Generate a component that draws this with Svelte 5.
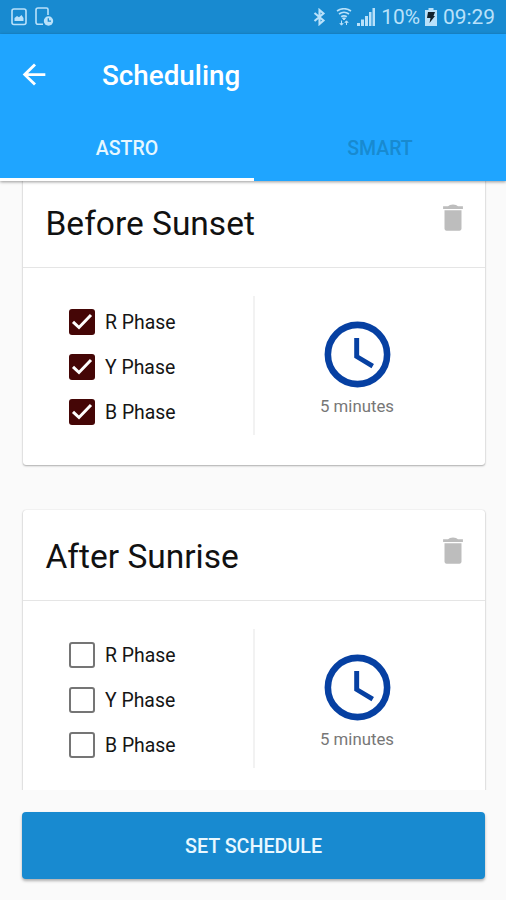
<script lang="ts">
	type Phase = { name: string; checked: boolean };
	type Schedule = { title: string; duration: string; phases: Phase[] };

	let activeTab = $state('ASTRO');
	const tabs = ['ASTRO', 'SMART'];

	let schedules: Schedule[] = $state([
		{
			title: 'Before Sunset',
			duration: '5 minutes',
			phases: [
				{ name: 'R Phase', checked: true },
				{ name: 'Y Phase', checked: true },
				{ name: 'B Phase', checked: true }
			]
		},
		{
			title: 'After Sunrise',
			duration: '5 minutes',
			phases: [
				{ name: 'R Phase', checked: false },
				{ name: 'Y Phase', checked: false },
				{ name: 'B Phase', checked: false }
			]
		}
	]);

	function remove(index: number) {
		schedules.splice(index, 1);
	}
</script>

<div class="screen">
	<div class="status-bar">
		<div class="notifications">
			<svg width="16" height="18" viewBox="0 0 16 18">
				<rect x="1" y="1" width="14" height="15.5" rx="2" fill="none" stroke="currentColor" stroke-width="1.6" />
				<path d="M3.5 13V10l2.5-2 2 1.2L10.5 7l2 3v3z" fill="currentColor" />
			</svg>
			<svg width="19" height="20" viewBox="0 0 19 20">
				<path d="M8 17.2H3a2 2 0 0 1-2-2V3a2 2 0 0 1 2-2h8.5a1.5 1.5 0 0 1 1.5 1.5V8" fill="none" stroke="currentColor" stroke-width="1.6" />
				<circle cx="13.5" cy="14" r="4.7" fill="currentColor" />
				<path d="M13.3 11.2V14.2H16" fill="none" stroke="#188ad0" stroke-width="1.3" />
			</svg>
		</div>
		<div class="system">
			<svg class="bluetooth" width="13" height="18" viewBox="0 0 13 18">
				<path d="M1.5 5l9 7.5L6.5 16V2l4 3.5-9 7.5" fill="none" stroke="currentColor" stroke-width="2.1" />
			</svg>
			<svg class="wifi" width="16" height="18" viewBox="0 0 16 18">
				<path d="M1 3Q8-1.5 15 3M3 6Q8 2.5 13 6M5.2 8.8Q8 6.8 10.8 8.8" fill="none" stroke="currentColor" stroke-width="1.7" />
				<path d="M6.5 10h3L8 12zM5.5 12.5V17M3.8 15.2l1.7 2 1.7-2M10.5 17V13M8.8 14.8l1.7-2 1.7 2" fill="currentColor" stroke="currentColor" stroke-width="1" />
			</svg>
			<svg class="signal" width="18" height="18" viewBox="0 0 18 18">
				<path d="M0 15h3v3H0zM4 11.5h3V18H4zM8 8h3v10H8zM12 4h2.5v14H12zM15.5 0H18v18h-2.5z" fill="currentColor" />
			</svg>
			<span class="battery-level">10%</span>
			<svg class="battery" width="12" height="18" viewBox="0 0 12 18">
				<path d="M3.5 0h5v2H12v16H0V2h3.5z" fill="currentColor" />
				<path d="M3 4h7L8.5 8H10L4.5 15 5.5 10H2z" fill="#12222d" />
			</svg>
			<span class="time">09:29</span>
		</div>
	</div>

	<header>
		<div class="toolbar">
			<button class="back" aria-label="Back">
				<svg width="34" height="33" viewBox="0 0 24 24" preserveAspectRatio="none">
					<path d="M20 11H7.83l5.59-5.59L12 4l-8 8 8 8 1.41-1.41L7.83 13H20v-2z" fill="currentColor" />
				</svg>
			</button>
			<h1>Scheduling</h1>
		</div>
		<nav>
			{#each tabs as tab}
				<button class="tab" class:active={activeTab === tab} onclick={() => (activeTab = tab)}>{tab}</button>
			{/each}
		</nav>
	</header>

	<main>
		{#each schedules as schedule, i}
			<section class="card">
				<div class="card-header">
					<h2>{schedule.title}</h2>
					<button class="delete" aria-label="Delete" onclick={() => remove(i)}>
						<svg width="34" height="35" viewBox="0 0 24 24" preserveAspectRatio="none">
							<path d="M6 19.5c0 .8.5 1.5 1.5 1.5h9c1 0 1.5-.7 1.5-1.5V7H6zM19 4.2h-3.5Q14.5 3 12 3T8.5 4.2H5v1.9h14z" fill="currentColor" />
						</svg>
					</button>
				</div>
				<div class="card-body">
					<div class="phases">
						{#each schedule.phases as phase}
							<label>
								<input type="checkbox" bind:checked={phase.checked} />
								<span class="box">
									{#if phase.checked}
										<svg width="26" height="26" viewBox="0 0 26 26">
											<path d="M4 12.8l6 5.7L22 6" fill="none" stroke="#fff" stroke-width="3" />
										</svg>
									{/if}
								</span>
								<span class="phase-name">{phase.name}</span>
							</label>
						{/each}
					</div>
					<div class="duration">
						<svg width="79" height="79" viewBox="0 0 24 24">
							<circle cx="12" cy="12" r="9" fill="none" stroke="currentColor" stroke-width="2" />
							<path d="M12.5 7H11v6l5.25 3.15.75-1.23-4.5-2.67z" fill="currentColor" />
						</svg>
						<span>{schedule.duration}</span>
					</div>
				</div>
			</section>
		{/each}
	</main>

	<footer>
		<button class="submit">SET SCHEDULE</button>
	</footer>
</div>

<style>
	:global(body) {
		margin: 0;
		background: #fafafa;
	}

	.screen {
		display: flex;
		flex-direction: column;
		width: 506px;
		height: 900px;
		overflow: hidden;
		background: #fafafa;
		font-family: Roboto, 'Liberation Sans', sans-serif;
	}

	button {
		padding: 0;
		border: 0;
		background: none;
		font-family: inherit;
		cursor: pointer;
	}

	svg {
		display: block;
		flex: none;
	}

	.status-bar {
		display: flex;
		justify-content: space-between;
		align-items: center;
		height: 34px;
		padding: 0 11px;
		box-sizing: border-box;
		background: #188ad0;
		color: #b9e1fa;
	}

	.notifications,
	.system {
		display: flex;
		align-items: center;
	}

	.notifications {
		gap: 8px;
	}

	.bluetooth {
		margin-right: 10px;
	}

	.wifi {
		margin-right: 5px;
	}

	.signal {
		margin-right: 6px;
	}

	.battery-level,
	.time {
		font-size: 20.9px;
		line-height: 36px;
	}

	.battery-level {
		margin-right: 5px;
	}

	.battery {
		margin-right: 6px;
	}

	header {
		position: relative;
		z-index: 1;
		flex: none;
		height: 147px;
		background: #1fa5ff;
		box-shadow: 0 1px 3px rgba(0, 0, 0, 0.4);
	}

	.toolbar {
		display: flex;
		align-items: center;
		height: 82px;
		padding-left: 17px;
	}

	.back {
		margin-top: -2px;
		color: #fff;
	}

	h1 {
		margin: 1px 0 0 51px;
		font-size: 27.8px;
		font-weight: 500;
		color: #fff;
	}

	nav {
		display: flex;
		height: 65px;
	}

	.tab {
		flex: 1;
		padding-top: 2px;
		border-bottom: 3px solid transparent;
		font-size: 19.5px;
		font-weight: 500;
		color: #188ad0;
	}

	.tab.active {
		flex: 0 0 254px;
		border-bottom-color: #fff;
		color: #e6f7ff;
	}

	main {
		flex: none;
		height: 609px;
		padding: 0 21px 0 23px;
		overflow: hidden;
	}

	.card {
		height: 288px;
		margin-bottom: 45px;
		border-radius: 3px;
		background: #fff;
		box-shadow:
			0 1px 2px rgba(0, 0, 0, 0.3),
			0 0 1px rgba(0, 0, 0, 0.2);
	}

	/* the list is scrolled down slightly under the header */
	.card:first-child {
		margin-top: -4px;
	}

	.card-header {
		display: flex;
		justify-content: space-between;
		height: 90px;
		padding: 0 15px 0 22.5px;
		border-bottom: 1px solid #e5e5e5;
	}

	h2 {
		margin: 0;
		font-size: 33.5px;
		font-weight: 400;
		line-height: 93px;
		color: #111;
	}

	.delete {
		align-self: flex-start;
		margin-top: 23px;
		color: #bdbdbd;
	}

	.card-body {
		display: flex;
		height: 139px;
		padding-top: 28px;
	}

	.phases {
		display: flex;
		flex-direction: column;
		gap: 19px;
		width: 232px;
		padding: 12.5px 0 0 46px;
		box-sizing: border-box;
		border-right: 2px solid #f2f2f2;
	}

	label {
		display: flex;
		align-items: center;
		height: 26px;
		cursor: pointer;
	}

	input {
		position: absolute;
		opacity: 0;
	}

	.box {
		width: 26px;
		height: 26px;
		margin-right: 10px;
		border: 2.5px solid #757575;
		border-radius: 3px;
		box-sizing: border-box;
	}

	input:checked + .box {
		border: 0;
		background: #450606;
	}

	.phase-name {
		font-size: 19.4px;
		line-height: 28px;
		padding-top: 3px;
		color: #151515;
	}

	.duration {
		display: flex;
		flex: 1;
		flex-direction: column;
		align-items: center;
		padding: 19px 26px 0 0;
		color: #0640a2;
	}

	.duration span {
		margin-top: 1px;
		font-size: 16.8px;
		line-height: 22px;
		color: #777;
	}

	footer {
		padding: 22px 21px 0 22px;
	}

	.submit {
		width: 100%;
		height: 67px;
		padding-top: 2px;
		border-radius: 4px;
		background: #188ad0;
		box-shadow: 0 2px 3px rgba(0, 0, 0, 0.3);
		font-size: 19.7px;
		font-weight: 500;
		color: #e9f8ff;
	}
</style>
